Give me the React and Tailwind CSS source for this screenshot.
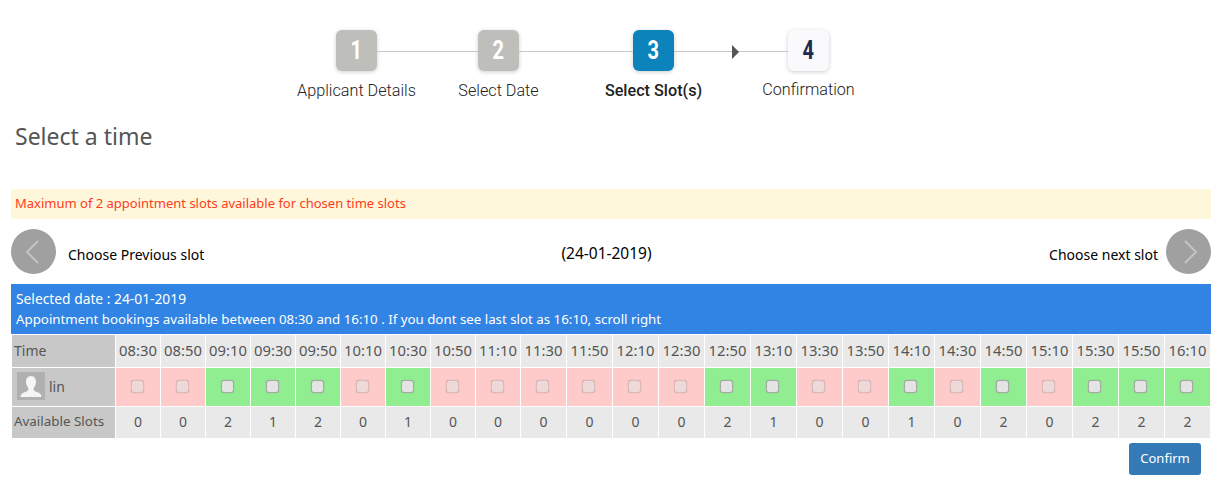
const times = ["08:30","08:50","09:10","09:30","09:50","10:10","10:30","10:50","11:10","11:30","11:50","12:10","12:30","12:50","13:10","13:30","13:50","14:10","14:30","14:50","15:10","15:30","15:50","16:10"]
const slots = [0,0,2,1,2,0,1,0,0,0,0,0,0,2,1,0,0,1,0,2,0,2,2,2]

const Step = ({ num, label, className, labelClass }) => (
    <div className="flex w-[41px] flex-col items-center">
        <div className={`flex h-[41px] w-[41px] items-center justify-center rounded-md text-[25px] font-bold shadow-[0_1px_4px_rgba(0,0,0,0.2)] ${className}`}>
            <span className="inline-block scale-x-[0.8]">{num}</span>
        </div>
        <span className={`whitespace-nowrap text-[16.2px] leading-[20px] font-['Roboto',sans-serif] text-[#222] ${labelClass}`}>{label}</span>
    </div>
)

const Connector = ({ width, arrow }) => (
    <div className={`relative mt-[21px] h-px bg-[#c8c8c8] ${width}`}>
        {arrow && <span className="absolute left-[58px] top-[-6px] h-0 w-0 border-y-[7px] border-l-[7px] border-y-transparent border-l-[#555]"></span>}
    </div>
)

const Circle = ({ dir }) => (
    <div className="flex h-[45px] w-[45px] items-center justify-center rounded-full bg-[#a0a0a0]">
        <svg width="18" height="28" viewBox="0 0 18 28" fill="none" stroke="#c4c4c4" strokeWidth="2">
            <path d={dir === "left" ? "M13 3 L2 14 L13 25" : "M5 3 L16 14 L5 25"} />
        </svg>
    </div>
)

export default function App() {
    return (
        <div className="h-[499px] w-[1220px] overflow-hidden bg-white font-['Noto_Sans',sans-serif] text-[14px]">
            <div className="flex justify-center pt-[30px] pr-[55px] font-['Roboto',sans-serif]">
                <div className="flex items-start">
                    <Step num="1" label="Applicant Details" className="bg-[#bebfba] text-white" labelClass="mt-[10px] font-light" />
                    <Connector width="w-[101px]" />
                    <Step num="2" label="Select Date" className="bg-[#bebfba] text-white" labelClass="mt-[10px] font-light" />
                    <Connector width="w-[114px]" />
                    <Step num="3" label="Select Slot(s)" className="bg-[#0c83bb] text-white" labelClass="mt-[10px] font-medium" />
                    <Connector width="w-[114px]" arrow />
                    <Step num="4" label="Confirmation" className="bg-[#fafafc] text-[#1d2b4f]" labelClass="mt-[9px] font-light" />
                </div>
            </div>

            <h2 className="mt-[19px] pl-[15px] text-[23px] leading-[32px] text-[#555]">Select a time</h2>

            <div className="mx-[11px] mt-[37px] flex h-[30px] w-[1200px] items-center bg-[#fff7dc] pl-[4px] text-[13px] text-[#ff3c1a]">
                Maximum of 2 appointment slots available for chosen time slots
            </div>

            <div className="ml-[11px] mt-[10px] flex w-[1200px] items-center justify-between">
                <div className="flex w-[400px] items-center gap-[12px]">
                    <Circle dir="left" />
                    <span className="mt-[5px] text-black">Choose Previous slot</span>
                </div>
                <span className="mr-[9px] mt-[5px] text-[15.5px] text-black">(24-01-2019)</span>
                <div className="flex w-[400px] items-center justify-end gap-[8px]">
                    <span className="mt-[5px] text-black">Choose next slot</span>
                    <Circle dir="right" />
                </div>
            </div>

            <div className="ml-[11px] mt-[10px] h-[50px] w-[1200px] bg-[#3184e4] pl-[5px] pt-[5px] text-[13.3px] leading-[20px] text-white">
                <div className="text-[13.8px]">Selected date : 24-01-2019</div>
                <div>Appointment bookings available between 08:30 and 16:10 . If you dont see last slot as 16:10, scroll right</div>
            </div>

            <div className="ml-[12px] mt-px grid w-[1198px] grid-cols-[103px_repeat(9,44px)_repeat(15,45px)] grid-rows-[32px_38px_31px] gap-px text-[#555]">
                <div className="flex items-center bg-[#c8c8c8] pb-[2px] pl-[2px]">Time</div>
                {times.map((t) => (
                    <div key={t} className="flex items-center justify-center bg-[#e9e9e9] pb-[2px] text-[14.8px]">{t}</div>
                ))}

                <div className="flex items-center gap-[4px] bg-[#c8c8c8] pb-[2px] pl-[5px]">
                    <svg width="28" height="28" viewBox="0 0 28 28">
                        <rect width="28" height="28" fill="#b0b0b0" />
                        <path d="M14 4 C10.5 4 9 7 9 10 C9 13 10.5 15 11.5 16.5 C11.5 18.5 10 19.5 7 20.5 C4.5 21.5 3.5 23 3.5 25 H24.5 C24.5 23 23.5 21.5 21 20.5 C18 19.5 16.5 18.5 16.5 16.5 C17.5 15 19 13 19 10 C19 7 17.5 4 14 4 Z" fill="#f5f5f5" />
                    </svg>
                    <span>lin</span>
                </div>
                {slots.map((s, i) => (
                    <div key={i} className={`flex items-center justify-center ${s > 0 ? "bg-[#90ee90]" : "bg-[#ffcaca]"}`}>
                        <span className={`mb-px mr-[2px] h-[13px] w-[13px] rounded-[3px] border shadow-[0_0_1px_rgba(0,0,0,0.3)] ${s > 0 ? "border-[#a8a8a8] bg-[#e4e4e4]" : "border-[#d8bcbc] bg-[#efd8d8]"}`}></span>
                    </div>
                ))}

                <div className="flex items-center bg-[#c8c8c8] pb-[2px] pl-[2px] text-[13.4px]">Available Slots</div>
                {slots.map((s, i) => (
                    <div key={i} className="flex items-center justify-center bg-[#e9e9e9] pb-[2px]">{s}</div>
                ))}
            </div>

            <div className="mt-[5px] flex w-[1201px] justify-end">
                <button className="h-[32px] w-[72px] rounded-[3px] bg-[#337ab7] text-[13px] text-white">Confirm</button>
            </div>
        </div>
    )
}
